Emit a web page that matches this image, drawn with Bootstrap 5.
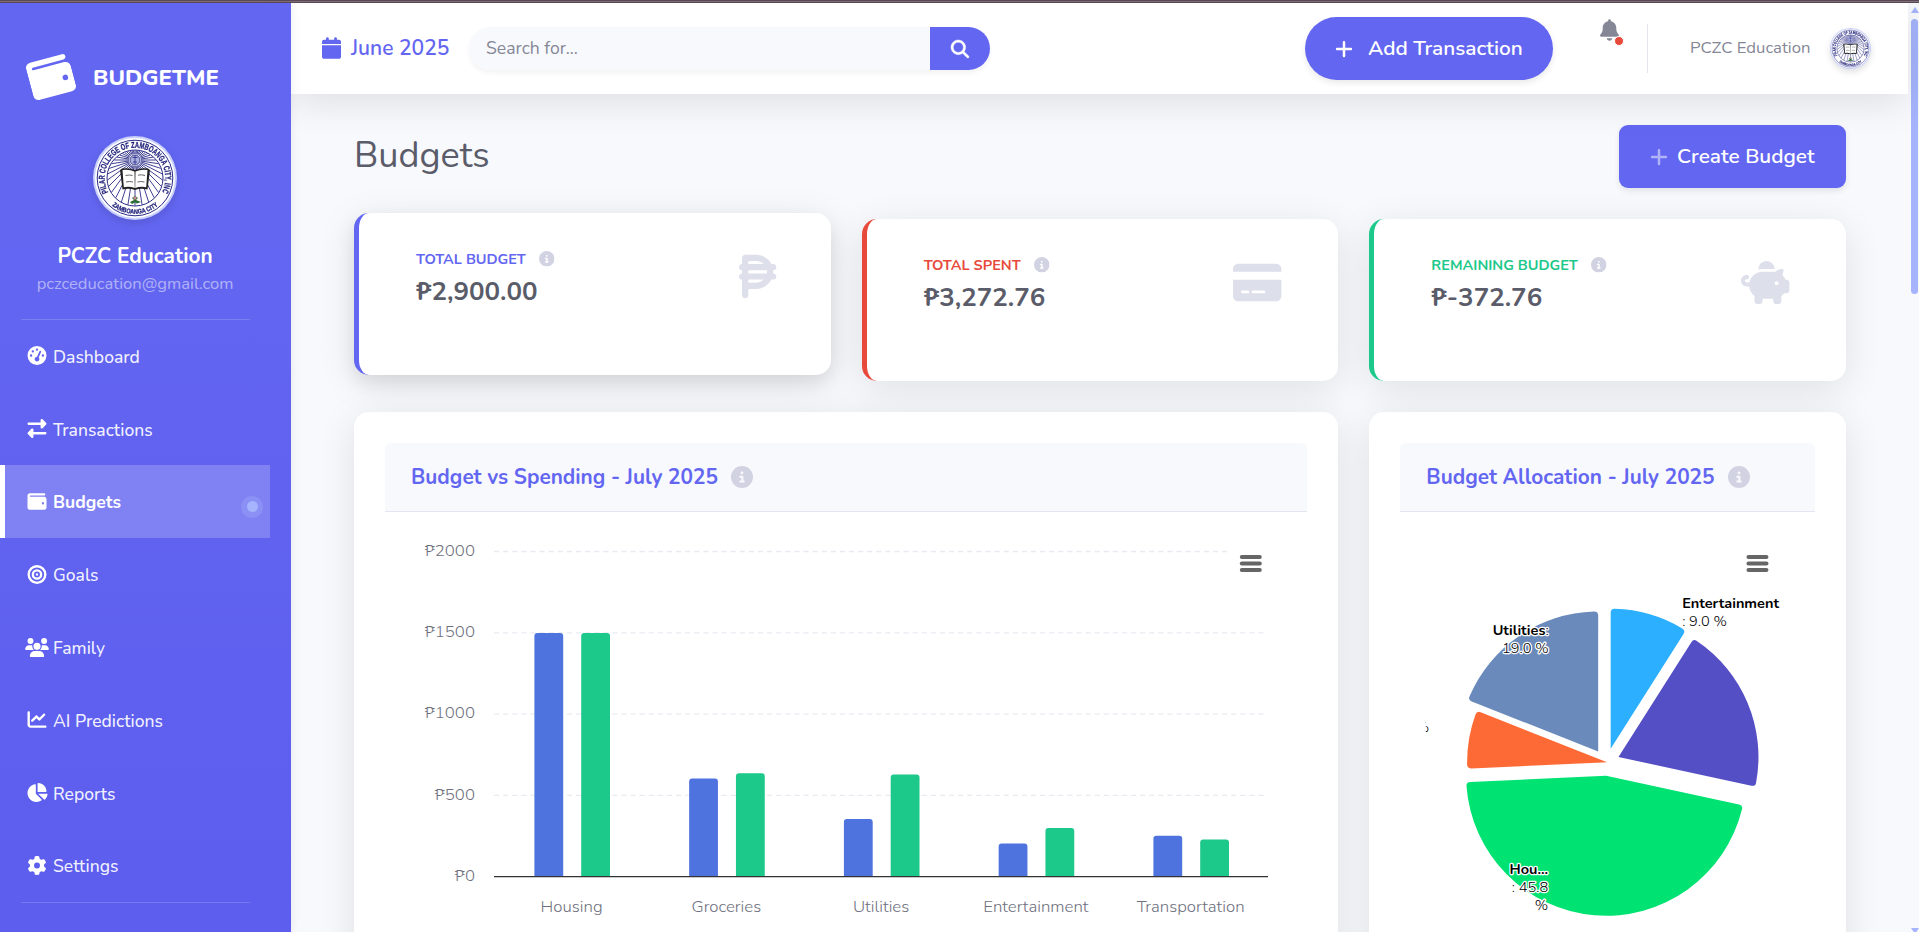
<!DOCTYPE html>
<html lang="en">
<head>
<meta charset="utf-8">
<meta name="viewport" content="width=device-width, initial-scale=1">
<title>BudgetMe - Budgets</title>
<link href="https://cdn.jsdelivr.net/npm/bootstrap@5.3.0/dist/css/bootstrap.min.css" rel="stylesheet">
<style>
:root{--indigo:#6366f1;--ink:#5a5c69;--mist:#f8f9fd}
body{font-family:Nunito,Inter,sans-serif;height:932px;overflow:hidden;background:var(--mist);color:var(--ink)}
.ico{display:block;fill:currentColor;flex:none;overflow:visible}
.frame-top{height:3px;background:linear-gradient(#5b4b56 0 1px,#846f7c 1px 2px,#5b4b56 2px)}
.side{width:291px;background:linear-gradient(#6366f1 25%,#5d5dee);z-index:3;box-shadow:0 0 10px rgba(0,0,0,.08)}
.brand{height:123px;padding:0 0 0 26px;gap:20px}
.brand .ico{transform:rotate(-15deg);margin:52px 0 0 3px}
.brand-name{font-size:22.2px;font-weight:800;margin-top:59px}
.seal-lg{width:84px;height:84px;filter:drop-shadow(0 3px 4px rgba(0,0,0,.12))}
.user-box{height:192.500px;width:270px;padding-top:10px}
.user-name{font-size:20.8px;font-weight:700;line-height:28px;margin-top:22px}
.user-mail{font-size:16.6px;line-height:24px;color:rgba(255,255,255,.5);margin-top:2px}
.rule{width:229px;margin-left:21px;height:1px;background:rgba(255,255,255,.16);flex:none}
.side .nav-link{height:72.8px;width:270px;padding:2px 0 0 27px;font-size:17.5px;font-weight:500;color:rgba(255,255,255,.92);gap:6px}
.side .nav-link .ico{color:#fff;width:20px;height:19px;margin-top:-2px}
.side .nav-link.active{background:rgba(255,255,255,.2);border-left:5px solid #fff;padding-left:22px;color:#fff;font-weight:700}
.pulse{width:22px;height:22px;border-radius:50%;background:rgba(165,180,252,.3);margin:9px 7px 0 auto}
.pulse i{width:11px;height:11px;border-radius:50%;background:#a5b4fc}
.top{height:91px;background:#fff;box-shadow:0 8px 38px rgba(0,0,0,.11);padding:0 37px 0 31px;z-index:2}
.month{font-size:21px;font-weight:600;color:var(--indigo);gap:10px;width:147px}
.finder{width:521px;height:43px;border-radius:22px;box-shadow:0 3px 5px rgba(0,0,0,.05)}
.finder .form-control{background:var(--mist);border:0;border-radius:22px 0 0 22px;font-family:inherit;font-size:17.6px;padding:0 17px;color:#858796}
.finder .form-control::placeholder{color:#858796}
.finder .btn{width:60px;border:0;background:var(--indigo);border-radius:0 22px 22px 0;padding:0;color:#fff}
.btn-add,.btn-new{background:var(--indigo);color:#fff!important;border:0;font-weight:600;height:63px;font-size:20.6px;box-shadow:0 3px 6px rgba(0,0,0,.09)}
.btn-add{width:248px;border-radius:32px;gap:15px;padding:0 0 0 30px;font-size:20.8px}
.btn-new{width:227px;border-radius:9px;gap:9px;padding:0 0 0 31px;font-size:20.8px}
.btn-new .ico{opacity:.5}
.bell{color:#858796;width:19px;margin:-38px 0 0 47px}
.bell span{right:-5px;bottom:-5px;width:10px;height:10px;background:#e74a3b;border:1px solid #fff;border-radius:50%}
.split{width:1px;height:49px;background:#e3e6f0;margin-left:28px}
.who{font-size:16.7px;color:#858796;margin:-1px 0 0 42px;width:119px;white-space:nowrap}
.seal-sm{width:41px;height:41px;margin-left:21px;filter:drop-shadow(0 3px 3px rgba(0,0,0,.12))}
.content{padding:31px 62px 0 63px}
.content h1{font-size:36px;font-weight:370;margin:-1px 0 0;color:var(--ink)}
.board{display:grid;grid-template-columns:repeat(3,1fr);gap:31px;margin-top:31px}
.panel{background:#fff;border-radius:15px;box-shadow:0 8px 38px rgba(0,0,0,.1)}
.stat{height:162px;border-left:5px solid var(--tone);padding:32.500px 57px 0 57px}
.stat.lifted{transform:translateY(-6px);box-shadow:0 8px 38px rgba(0,0,0,.1),0 8px 18px rgba(0,0,0,.08)}
.stat-label{font-size:14.5px;font-weight:700;line-height:26px;color:var(--tone);gap:13px}
.stat-label .ico,.chart-head .ico{color:#d1d3e2}
.stat-value{font-size:25.9px;font-weight:700;line-height:38px;margin-top:1px}
.stat-pic{color:#dddfeb;margin-top:9.500px}
.lifted .stat-pic{transform:translateX(.5px) scale(1.16)}
.chart-card{height:560px;padding:31px 31px 0}
.chart-head{height:69px;background:var(--mist);border-bottom:1px solid #e3e6f0;border-radius:6px 6px 0 0;padding:0 26px;color:var(--indigo);gap:13px}
.chart-head h2{font-size:20.8px;font-weight:700;margin:0}
.chart{display:block;width:100%;height:460px;overflow:visible;font-family:Nunito,Inter,sans-serif}
.ax{font-size:16.8px;font-weight:330;fill:#6e707e}
.pl{font-size:14.6px;font-weight:330;fill:#000;stroke:#fff;stroke-width:2.6px;paint-order:stroke;stroke-linejoin:round}
.pl .b{font-weight:700;font-size:14.5px}
.gutter{width:11px;background:var(--mist)}
.thumb{width:7px;height:275px;margin:6px 0 0 3px;border-radius:4px;background:#a5b4fc}
.up,.down{width:0;height:0;border:4px solid transparent;margin-left:3px}
.up{border-bottom:6px solid #a5b4fc;border-top:0;margin-top:4px}
.down{border-top:6px solid #a5b4fc;border-bottom:0;margin-top:auto;margin-bottom:-2px}
</style>
</head>
<body class="d-flex flex-column">
<svg width="0" height="0" class="position-absolute" aria-hidden="true"><defs>
<symbol id="i-info" viewBox="0 0 512 512"><path fill-rule="evenodd" d="M256 512A256 256 0 1 0 256 0a256 256 0 1 0 0 512zM216 336h24v-64h-24c-13.300 0-24-10.700-24-24s10.700-24 24-24h48c13.300 0 24 10.700 24 24v88h8c13.300 0 24 10.700 24 24s-10.700 24-24 24h-80c-13.300 0-24-10.700-24-24s10.700-24 24-24zM256 128a32 32 0 1 1 0 64 32 32 0 1 1 0-64z"/></symbol>
<symbol id="i-wallet" viewBox="0 0 512 512"><path fill-rule="evenodd" d="M64 32C28.700 32 0 60.700 0 96V416c0 35.300 28.700 64 64 64H448c35.300 0 64-28.700 64-64V192c0-35.300-28.700-64-64-64H80c-8.800 0-16-7.200-16-16s7.200-16 16-16H448c17.700 0 32-14.300 32-32s-14.300-32-32-32H64zM416 272a32 32 0 1 1 0 64 32 32 0 1 1 0-64z"/></symbol>
<symbol id="i-plus" viewBox="0 0 448 512"><path d="M256 80c0-17.700-14.300-32-32-32s-32 14.300-32 32V224H48c-17.700 0-32 14.300-32 32s14.300 32 32 32H192V432c0 17.700 14.300 32 32 32s32-14.300 32-32V288H400c17.700 0 32-14.300 32-32s-14.300-32-32-32H256V80z"/></symbol>
<symbol id="seal" viewBox="0 0 84 84">
<circle cx="42" cy="42" r="42" fill="#c9d0fb"/><circle cx="42" cy="42" r="40" fill="#fff"/>
<circle cx="42" cy="42" r="37.800" fill="none" stroke="#2a2b86" stroke-width="1"/>
<circle cx="42" cy="42" r="28" fill="none" stroke="#2a2b86" stroke-width="1"/>
<g id="rays" stroke="#2a2b86" stroke-width=".9"></g>
<circle cx="42" cy="24" r="5" fill="#a9b0dd" stroke="#2a2b86" stroke-width=".8"/><path d="M39.500 21.500h5M42 19v10M40 26h4" stroke="#2a2b86" stroke-width=".8"/>
<path d="M27 34l2-1.500q7-1 13 1.500q6-2.500 13-1.500l2 1.500l-2.500 19.500q-7-1.500-12.500 .5q-6-2-12.500-.5z" fill="#222"/>
<path d="M29.500 34q6.500-1 12 1.500l.3 16.500q-5.500-2-11-.8zM54.500 34q-6.500-1-12 1.500l-.3 16.500q5.500-2 11-.8z" fill="#fff"/>
<path d="M32.500 39.500q4-1 7 0M45 39.200q3-1 7 .3M33 46q4-1 7 0M44.500 46q3-1 7 0" fill="none" stroke="#555" stroke-width=".9"/>
<path d="M37 66l4-2-2-2 3-2 3 2-2 2 5 2-4 1.500-2-1-3 1.500z" fill="#2d6b35"/><circle cx="42" cy="62" r="1.600" fill="#cf8d9b"/>
<path id="arcTop" d="M15.200 56.200A30.300 30.300 0 1 1 68.800 56.200" fill="none"/>
<path id="arcBot" d="M15 65.700A36 36 0 0 0 69 65.700" fill="none"/>
<g font-family="Liberation Sans" font-weight="700" fill="#1d1e78" stroke="#1d1e78" stroke-width=".25"><text font-size="8.600"><textPath href="#arcTop" textLength="124" lengthAdjust="spacingAndGlyphs">PILAR COLLEGE OF ZAMBOANGA CITY, INC</textPath></text>
<text font-size="6.600"><textPath href="#arcBot" startOffset="5.500" textLength="50" lengthAdjust="spacingAndGlyphs">ZAMBOANGA CITY</textPath></text></g>
</symbol></defs></svg>

<div class="frame-top flex-shrink-0"></div>
<div class="d-flex flex-grow-1" style="min-height:0">
  <aside class="side d-flex flex-column flex-shrink-0 text-white">
    <div class="brand d-flex align-items-start">
      <svg class="ico" width="44" height="44"><use href="#i-wallet"/></svg>
      <span class="brand-name">BUDGETME</span>
    </div>
    <div class="user-box d-flex flex-column align-items-center">
      <svg class="seal-lg flex-shrink-0"><use href="#seal"/></svg>
      <div class="user-name">PCZC Education</div>
      <div class="user-mail">pczceducation@gmail.com</div>
    </div>
    <div class="rule"></div>
    <nav class="nav flex-column flex-nowrap">
      <a class="nav-link d-flex align-items-center"><svg class="ico" viewBox="0 0 512 512"><path d="M0 256a256 256 0 1 1 512 0A256 256 0 1 1 0 256zM288 96a32 32 0 1 0 -64 0 32 32 0 1 0 64 0zM256 416c35.300 0 64-28.700 64-64c0-17.400-6.900-33.100-18.100-44.600L366 161.700c5.300-12.100-.2-26.300-12.300-31.600s-26.300 .2-31.600 12.300L257.900 288c-.6 0-1.300 0-1.900 0c-35.300 0-64 28.700-64 64s28.700 64 64 64zM176 144a32 32 0 1 0 -64 0 32 32 0 1 0 64 0zM96 288a32 32 0 1 0 0-64 32 32 0 1 0 0 64zm352-32a32 32 0 1 0 -64 0 32 32 0 1 0 64 0z" fill-rule="evenodd"/></svg>Dashboard</a>
      <a class="nav-link d-flex align-items-center"><svg class="ico" viewBox="0 0 512 512"><path d="M32 96l320 0V32c0-12.900 7.800-24.600 19.800-29.600s25.700-2.200 34.900 6.900l96 96c6 6 9.400 14.100 9.400 22.600s-3.400 16.600-9.400 22.600l-96 96c-9.200 9.200-22.900 11.900-34.900 6.900s-19.800-16.600-19.800-29.600V160L32 160c-17.700 0-32-14.300-32-32s14.300-32 32-32zM480 352c17.700 0 32 14.300 32 32s-14.300 32-32 32H160v64c0 12.900-7.800 24.600-19.800 29.600s-25.700 2.200-34.900-6.900l-96-96c-6-6-9.400-14.100-9.400-22.600s3.400-16.600 9.400-22.600l96-96c9.200-9.200 22.900-11.900 34.900-6.900s19.800 16.600 19.800 29.600l0 64H480z"/></svg>Transactions</a>
      <a class="nav-link active d-flex align-items-center"><svg class="ico"><use href="#i-wallet"/></svg>Budgets<span class="pulse d-flex align-items-center justify-content-center"><i></i></span></a>
      <a class="nav-link d-flex align-items-center"><svg class="ico" viewBox="0 0 512 512"><path fill-rule="evenodd" d="M448 256A192 192 0 1 0 64 256a192 192 0 1 0 384 0zM0 256a256 256 0 1 1 512 0A256 256 0 1 1 0 256zm256 80a80 80 0 1 0 0-160 80 80 0 1 0 0 160zm0-224a144 144 0 1 1 0 288 144 144 0 1 1 0-288zM224 256a32 32 0 1 1 64 0 32 32 0 1 1 -64 0z"/></svg>Goals</a>
      <a class="nav-link d-flex align-items-center"><svg class="ico" viewBox="64 0 512 512"><path d="M144 0a80 80 0 1 1 0 160A80 80 0 1 1 144 0zM512 0a80 80 0 1 1 0 160A80 80 0 1 1 512 0zM0 298.700C0 239.800 47.800 192 106.700 192h42.700c15.900 0 31 3.500 44.600 9.700c-1.300 7.200-1.900 14.700-1.900 22.300c0 38.200 16.800 72.500 43.300 96c-.2 0-.4 0-.7 0H21.300C9.600 320 0 310.400 0 298.700zM405.300 320c-.2 0-.4 0-.7 0c26.600-23.500 43.300-57.800 43.300-96c0-7.600-.7-15-1.900-22.300c13.600-6.300 28.700-9.700 44.600-9.700h42.700C592.200 192 640 239.800 640 298.700c0 11.800-9.600 21.300-21.300 21.300H405.300zM224 224a96 96 0 1 1 192 0 96 96 0 1 1 -192 0zM128 485.300C128 411.700 187.700 352 261.300 352H378.700C452.300 352 512 411.700 512 485.300c0 14.700-11.900 26.700-26.700 26.700H154.700c-14.700 0-26.700-11.900-26.700-26.700z"/></svg>Family</a>
      <a class="nav-link d-flex align-items-center"><svg class="ico" viewBox="0 0 512 512"><path d="M64 64c0-17.700-14.300-32-32-32S0 46.300 0 64V400c0 44.200 35.800 80 80 80H480c17.700 0 32-14.300 32-32s-14.300-32-32-32H80c-8.800 0-16-7.200-16-16V64zm406.600 86.600c12.500-12.500 12.500-32.800 0-45.300s-32.800-12.500-45.300 0L320 210.700l-57.400-57.400c-12.500-12.500-32.800-12.500-45.300 0l-112 112c-12.500 12.500-12.500 32.800 0 45.300s32.800 12.500 45.300 0L240 221.300l57.400 57.400c12.500 12.500 32.800 12.500 45.300 0l128-128z"/></svg>AI Predictions</a>
      <a class="nav-link d-flex align-items-center"><svg class="ico" viewBox="32 0 512 512"><path d="M304 240V16.600c0-9 7-16.600 16-16.600C443.700 0 544 100.300 544 224c0 9-7.600 16-16.600 16H304zM32 272C32 150.700 122.100 50.300 239 34.300c9.200-1.300 17 6.100 17 15.400V288L412.500 444.500c6.700 6.700 6.200 17.700-1.500 23.100C371.800 495.600 323.800 512 272 512C139.500 512 32 404.600 32 272zm526.400 16c9.300 0 16.600 7.800 15.400 17c-7.700 55.900-34.600 105.600-73.900 142.300c-6 5.600-15.400 5.200-21.200-.7L320 288H558.400z"/></svg>Reports</a>
      <a class="nav-link d-flex align-items-center"><svg class="ico" viewBox="0 0 512 512"><path fill-rule="evenodd" d="M495.900 166.600c3.200 8.700 .5 18.400-6.400 24.600l-43.300 39.400c1.100 8.300 1.700 16.800 1.700 25.400s-.6 17.100-1.700 25.400l43.300 39.400c6.900 6.200 9.600 15.900 6.400 24.600c-4.400 11.900-9.700 23.300-15.800 34.300l-4.700 8.100c-6.600 11-14 21.400-22.100 31.200c-5.900 7.200-15.700 9.600-24.500 6.800l-55.700-17.700c-13.400 10.300-28.200 18.900-44 25.400l-12.500 57.100c-2 9.100-9 16.300-18.200 17.800c-13.800 2.300-28 3.500-42.500 3.500s-28.700-1.200-42.500-3.500c-9.200-1.500-16.200-8.700-18.200-17.800l-12.500-57.100c-15.800-6.500-30.600-15.100-44-25.400L83.100 425.900c-8.800 2.800-18.600 .3-24.500-6.800c-8.100-9.800-15.500-20.200-22.100-31.200l-4.700-8.100c-6.100-11-11.400-22.400-15.800-34.300c-3.200-8.700-.5-18.400 6.400-24.600l43.300-39.400C64.600 273.100 64 264.600 64 256s.6-17.100 1.700-25.400L22.400 191.200c-6.900-6.200-9.600-15.900-6.400-24.600c4.400-11.900 9.700-23.300 15.800-34.300l4.700-8.100c6.600-11 14-21.400 22.100-31.200c5.900-7.200 15.700-9.600 24.500-6.800l55.700 17.700c13.400-10.300 28.200-18.900 44-25.400l12.500-57.100c2-9.100 9-16.300 18.200-17.800C227.300 1.200 241.500 0 256 0s28.700 1.200 42.500 3.500c9.200 1.500 16.200 8.700 18.200 17.800l12.500 57.100c15.800 6.500 30.600 15.100 44 25.400l55.700-17.700c8.800-2.800 18.600-.3 24.500 6.800c8.100 9.800 15.500 20.200 22.100 31.200l4.700 8.100c6.100 11 11.400 22.400 15.800 34.300zM256 336a80 80 0 1 0 0-160 80 80 0 1 0 0 160z"/></svg>Settings</a>
    </nav>
    <div class="rule"></div>
  </aside>

  <main class="flex-grow-1 d-flex flex-column" style="min-width:0">
    <header class="top d-flex align-items-center flex-shrink-0 position-relative">
      <div class="month d-flex align-items-center"><svg class="ico" width="19" height="22" viewBox="0 0 448 512" style="margin-top:-2px"><path d="M96 32V64H48C21.500 64 0 85.500 0 112v48H448V112c0-26.500-21.500-48-48-48H352V32c0-17.700-14.300-32-32-32s-32 14.300-32 32V64H160V32c0-17.700-14.300-32-32-32S96 14.300 96 32zM448 192H0V464c0 26.500 21.500 48 48 48H400c26.500 0 48-21.500 48-48V192z"/></svg><span class="text-nowrap">June 2025</span></div>
      <div class="finder input-group flex-nowrap">
        <input class="form-control" type="text" placeholder="Search for..." aria-label="Search">
        <button class="btn d-flex align-items-center justify-content-center" type="button" aria-label="Search"><svg class="ico" width="18" height="18" viewBox="0 0 512 512" stroke="currentColor" stroke-width="12"><path fill-rule="evenodd" d="M416 208c0 45.900-14.900 88.300-40 122.700L502.600 457.400c12.500 12.500 12.500 32.800 0 45.300s-32.800 12.500-45.300 0L330.700 376c-34.400 25.200-76.800 40-122.700 40C93.100 416 0 322.900 0 208S93.100 0 208 0S416 93.100 416 208zM208 352a144 144 0 1 0 0-288 144 144 0 1 0 0 288z"/></svg></button>
      </div>
      <a class="btn btn-add d-flex align-items-center ms-auto"><svg class="ico" width="18" height="20"><use href="#i-plus"/></svg>Add Transaction</a>
      <div class="bell position-relative"><svg class="ico" width="19" height="22" viewBox="0 0 448 512"><path d="M224 0c-17.700 0-32 14.300-32 32V51.200C119 66 64 130.600 64 208v18.800c0 47-17.300 92.400-48.500 127.600l-7.400 8.300c-8.400 9.400-10.400 22.900-5.300 34.400S19.400 416 32 416H416c12.600 0 24-7.400 29.200-18.900s3.100-25-5.300-34.400l-7.400-8.300C401.300 319.200 384 273.900 384 226.800V208c0-77.400-55-142-128-156.800V32c0-17.700-14.300-32-32-32zm45.300 493.300c12-12 18.700-28.300 18.700-45.300H160c0 17 6.700 33.300 18.700 45.300s28.300 18.700 45.300 18.700s33.300-6.700 45.300-18.700z"/></svg><span class="position-absolute"></span></div>
      <div class="split"></div>
      <div class="who">PCZC Education</div>
      <svg class="seal-sm flex-shrink-0"><use href="#seal"/></svg>
    </header>

    <section class="content">
      <div class="d-flex align-items-center justify-content-between">
        <h1>Budgets</h1>
        <a class="btn btn-new d-flex align-items-center"><svg class="ico" width="18" height="20"><use href="#i-plus"/></svg>Create Budget</a>
      </div>
      <div class="board">
        <article class="panel stat lifted d-flex justify-content-between align-items-start" style="--tone:#6366f1">
          <div><div class="stat-label d-flex align-items-center">TOTAL BUDGET<svg class="ico" width="15.500" height="15.500"><use href="#i-info"/></svg></div><div class="stat-value">₱2,900.00</div></div>
          <svg class="ico stat-pic" width="32.300" height="43" viewBox="0 0 384 512"><path fill-rule="evenodd" d="M64 32C46.300 32 32 46.300 32 64v64c-17.700 0-32 14.300-32 32s14.300 32 32 32l0 32c-17.700 0-32 14.300-32 32s14.300 32 32 32v64 96c0 17.700 14.300 32 32 32s32-14.300 32-32V384h80c68.400 0 127.700-39 156.800-96H352c17.700 0 32-14.300 32-32s-14.300-32-32-32h-.7c.5-5.300 .7-10.600 .7-16s-.2-10.700-.7-16H352c17.700 0 32-14.300 32-32s-14.300-32-32-32H332.800C303.700 71 244.400 32 176 32H64zm190.400 96H96V96h80c30.500 0 58.200 12.200 78.400 32zM96 192H286.900c.7 5.200 1.100 10.600 1.100 16s-.4 10.800-1.100 16H96V192zm158.400 96c-20.200 19.800-47.900 32-78.400 32H96V288H254.400z"/></svg>
        </article>
        <article class="panel stat d-flex justify-content-between align-items-start" style="--tone:#e74a3b">
          <div><div class="stat-label d-flex align-items-center">TOTAL SPENT<svg class="ico" width="15.500" height="15.500"><use href="#i-info"/></svg></div><div class="stat-value">₱3,272.76</div></div>
          <svg class="ico stat-pic" width="48.400" height="43" viewBox="0 0 576 512"><path fill-rule="evenodd" d="M64 32C28.700 32 0 60.700 0 96v32H576V96c0-35.300-28.700-64-64-64H64zM576 224H0V416c0 35.300 28.700 64 64 64H512c35.300 0 64-28.700 64-64V224zM112 352h64c8.800 0 16 7.200 16 16s-7.200 16-16 16H112c-8.800 0-16-7.200-16-16s7.200-16 16-16zm112 16c0-8.800 7.200-16 16-16H368c8.800 0 16 7.200 16 16s-7.200 16-16 16H240c-8.800 0-16-7.200-16-16z"/></svg>
        </article>
        <article class="panel stat d-flex justify-content-between align-items-start" style="--tone:#1cc88a">
          <div><div class="stat-label d-flex align-items-center">REMAINING BUDGET<svg class="ico" width="15.500" height="15.500"><use href="#i-info"/></svg></div><div class="stat-value">₱-372.76</div></div>
          <svg class="ico stat-pic" width="48.400" height="43" viewBox="0 0 576 512"><path fill-rule="evenodd" d="M400 96l0 .7c-5.300-.4-10.600-.7-16-.7H256c-16.500 0-32.500 2.100-47.800 6c-.1-2-.2-4-.2-6c0-53 43-96 96-96s96 43 96 96zm-16 32c3.500 0 7 .1 10.400 .3c4.200 .3 8.400 .7 12.600 1.300C424.600 109.100 450.800 96 480 96h11.500c10.400 0 18 9.800 15.500 19.900l-13.800 55.200c15.800 14.800 28.700 32.800 37.500 52.900H544c17.700 0 32 14.300 32 32v96c0 17.700-14.300 32-32 32H512c-9.100 12.100-19.900 22.900-32 32v64c0 17.700-14.300 32-32 32H416c-17.700 0-32-14.300-32-32V448H256v32c0 17.700-14.300 32-32 32H192c-17.700 0-32-14.300-32-32V416c-34.900-26.200-58.700-66.300-63.200-112H68c-37.600 0-68-30.400-68-68s30.400-68 68-68h4c13.300 0 24 10.700 24 24s-10.700 24-24 24H68c-11 0-20 9-20 20s9 20 20 20H99.200c12.100-59.800 57.700-107.500 116.300-122.800c12.900-3.400 26.500-5.200 40.500-5.200H384zm64 136a24 24 0 1 0 -48 0 24 24 0 1 0 48 0z"/></svg>
        </article>

        <article class="panel chart-card" style="grid-column:span 2">
          <div class="chart-head d-flex align-items-center"><h2>Budget vs Spending - July 2025</h2><svg class="ico" width="22" height="22"><use href="#i-info"/></svg></div>
          <svg class="chart" id="bars" viewBox="385 512 922 460" preserveAspectRatio="xMinYMin meet"></svg>
        </article>
        <article class="panel chart-card">
          <div class="chart-head d-flex align-items-center"><h2>Budget Allocation - July 2025</h2><svg class="ico" width="22" height="22"><use href="#i-info"/></svg></div>
          <svg class="chart" id="pie" viewBox="1400.300 512 414.700 460" preserveAspectRatio="xMinYMin meet"></svg>
        </article>
      </div>
    </section>
  </main>
  <div class="gutter d-flex flex-column flex-shrink-0"><div class="up"></div><div class="thumb"></div><div class="down"></div></div>
</div>

<script src="https://cdn.jsdelivr.net/npm/bootstrap@5.3.0/dist/js/bootstrap.bundle.min.js"></script>
<script>
const menu = (x) => [557, 563.5, 570].map(y => `<path d="M${x} ${y}h18" stroke="#666" stroke-width="4" stroke-linecap="round"/>`).join('');

// Grouped bars: budget and spending per category
const base = 876.7, step = 81.3;
let out = '';
for (let i = 1; i <= 4; i++) {
  const y = base - step * i;
  out += `<path d="M494 ${y}H${i === 4 ? 1231 : 1266}" stroke="#e9ebf3" stroke-width="1.3" stroke-dasharray="5.200 3.900"/>`;
}
for (let i = 0; i <= 4; i++) out += `<text class="ax" x="475" y="${base - step * i + 4.2}" text-anchor="end">₱${i * 500}</text>`;
const data = [['Housing', 633, 633], ['Groceries', 778.5, 773.3], ['Utilities', 819, 774.6], ['Entertainment', 843.6, 828], ['Transportation', 835.8, 839.6]];
data.forEach(([name, b, s], i) => {
  const cx = 571.6 + 154.75 * i;
  [[cx - 37.2, b, '#4e73df'], [cx + 9.6, s, '#1cc88a']].forEach(([x, y, c]) => {
    out += `<path d="M${x} ${base}V${y + 3}q0-3 3-3h22.800q3 0 3 3V${base}z" fill="${c}"/>`;
  });
  out += `<text class="ax" x="${cx}" y="912" text-anchor="middle">${name}</text>`;
});
out += `<path d="M494 ${base}H1268" stroke="#333" stroke-width="1.3"/>` + menu(1241.8);
bars.innerHTML = out;

// Exploded pie: apex, start and end angle clockwise from north, with rounded outer corners
const R = 140;
const slice = (x, y, a, b, color) => {
  const p = (deg, r) => { const t = deg * Math.PI / 180; return (x + r * Math.sin(t)).toFixed(2) + ' ' + (y - r * Math.cos(t)).toFixed(2); };
  const d = 4 / R * 180 / Math.PI;
  return `<path fill="${color}" d="M${x} ${y}L${p(a, R - 4)}Q${p(a, R)} ${p(a + d, R)}A${R} ${R} 0 0 1 ${p(b - d, R)}Q${p(b, R)} ${p(b, R - 4)}Z"/>`;
};
pie.innerHTML = slice(1611, 748.8, 0, 32.4, '#2caffe') + slice(1618.8, 757, 32.4, 102.2, '#544fc5')
  + slice(1606.4, 775.8, 102.2, 267.4, '#00e272') + slice(1607.4, 762.3, 267.4, 291.6, '#fe6a35')
  + slice(1598.5, 751.5, 291.6, 360, '#6b8abc') + menu(1748.8)
  + `<g class="pl"><text class="b" x="1682.500" y="608">Entertainment</text><text x="1682.500" y="625.800">: 9.0 %</text>
  <g text-anchor="end"><text x="1549" y="635"><tspan class="b">Utilities</tspan>:</text><text x="1549" y="652.800">19.0 %</text>
  <text class="b" x="1548.500" y="874">Hou...</text><text x="1548.500" y="892.500">: 45.8</text><text x="1548.500" y="910.500">%</text></g></g>
  <clipPath id="edge"><path d="M1426 700h20v50h-20z"/></clipPath><g clip-path="url(#edge)"><text class="pl" x="1429.500" y="732" text-anchor="end">%</text></g>`;

// Sunburst behind the open book of the seal
let r = '';
for (let a = 0; a < 360; a += 9) {
  const t = a * Math.PI / 180, dx = Math.sin(t), dy = -Math.cos(t);
  const len = dy * 18 + Math.sqrt(dy * dy * 324 + 27.5 * 27.5 - 324);
  r += `<path d="M${42 + dx * 6} ${24 + dy * 6}L${42 + dx * len} ${24 + dy * len}"/>`;
}
rays.innerHTML = r;
</script>
</body>
</html>
